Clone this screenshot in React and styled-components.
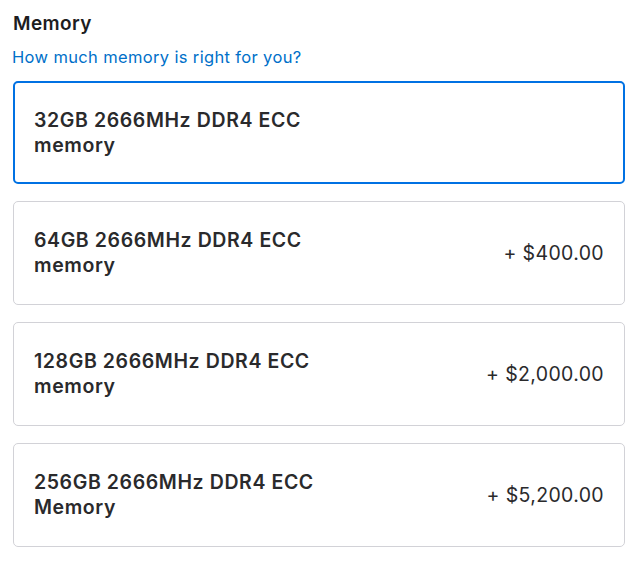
import styled, { createGlobalStyle } from "styled-components";

const GlobalStyle = createGlobalStyle`
  body {
    margin: 0;
    background: #fff;
    font-family: Inter, "Liberation Sans", sans-serif;
    color: #1d1d1f;
  }
`;

const Section = styled.section`
  padding: 12px 17px 0 13px;
`;

const Heading = styled.h2`
  margin: 0;
  font-size: 19px;
  font-weight: 600;
  line-height: 24px;
  letter-spacing: 0.4px;
  color: #1d1d1f;
`;

const HelpLink = styled.a`
  display: block;
  margin-top: 11px;
  margin-left: -1px;
  font-size: 16.5px;
  line-height: 21px;
  letter-spacing: 0.35px;
  color: #0070c9;
  text-decoration: none;
`;

const Options = styled.div`
  display: flex;
  flex-direction: column;
  gap: 17px;
  margin-top: 13px;
`;

const Option = styled.div`
  display: flex;
  align-items: center;
  justify-content: space-between;
  box-sizing: border-box;
  height: ${(p) => (p.$selected ? "103px" : "104px")};
  padding: 0 ${(p) => (p.$selected ? "19px" : "20px")};
  border: ${(p) => (p.$selected ? "2px solid #0071e3" : "1px solid #d2d2d7")};
  border-radius: 5px;
  background: #fff;
`;

const Label = styled.div`
  font-size: 19.5px;
  font-weight: 600;
  line-height: 25px;
  letter-spacing: 0.6px;
  color: #2a2a2c;
`;

const Line = styled.span`
  display: block;
`;

const Price = styled.div`
  font-size: 19.5px;
  font-weight: 400;
  line-height: 25px;
  letter-spacing: 0.35px;
  color: #2a2a2c;
`;

const options = [
  { name: "32GB 2666MHz DDR4 ECC", sub: "memory", selected: true },
  { name: "64GB 2666MHz DDR4 ECC", sub: "memory", price: "+ $400.00" },
  { name: "128GB 2666MHz DDR4 ECC", sub: "memory", price: "+ $2,000.00" },
  { name: "256GB 2666MHz DDR4 ECC", sub: "Memory", price: "+ $5,200.00" },
];

export default function App() {
  return (
    <>
      <GlobalStyle />
      <Section>
        <Heading>Memory</Heading>
        <HelpLink href="#">How much memory is right for you?</HelpLink>
        <Options>
          {options.map((o, i) => (
            <Option key={i} $selected={o.selected}>
              <Label>
                <Line>{o.name}</Line>
                <Line>{o.sub}</Line>
              </Label>
              {o.price && <Price>{o.price}</Price>}
            </Option>
          ))}
        </Options>
      </Section>
    </>
  );
}
